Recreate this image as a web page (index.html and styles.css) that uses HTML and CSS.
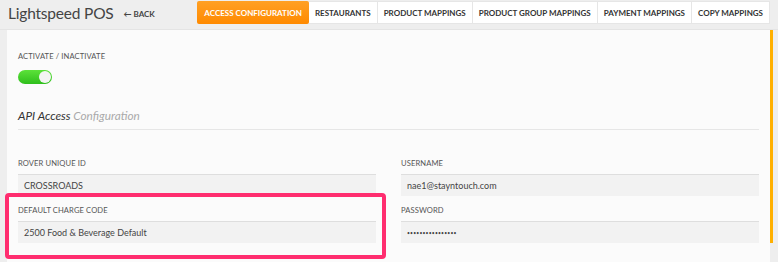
FILE: index.html
```html
<!DOCTYPE html>
<html lang="en">
<head>
<meta charset="utf-8"/>
<title>Lightspeed POS</title>
<link rel="stylesheet" href="styles.css">
</head>
<body>
<header class="topbar">
  <h1>Lightspeed POS</h1>
  <a class="back" href="#">&larr; Back</a>
  <nav class="tabs">
    <button class="tab active">Access Configuration</button>
    <button class="tab">Restaurants</button>
    <button class="tab">Product Mappings</button>
    <button class="tab">Product Group Mappings</button>
    <button class="tab">Payment Mappings</button>
    <button class="tab">Copy Mappings</button>
  </nav>
</header>
<div class="content">
  <section class="panel">
    <div class="label">Activate / Inactivate</div>
    <div class="toggle"><span class="knob"></span></div>
    <h2 class="heading">API Access <span>Configuration</span></h2>
    <div class="grid">
      <div class="field">
        <div class="label">Rover Unique ID</div>
        <div class="input">CROSSROADS</div>
      </div>
      <div class="field">
        <div class="label">Username</div>
        <div class="input">nae1@stayntouch.com</div>
      </div>
      <div class="field highlight">
        <div class="label">Default Charge Code</div>
        <div class="input">2500 Food &amp; Beverage Default</div>
      </div>
      <div class="field">
        <div class="label">Password</div>
        <div class="input dots">&bull;&bull;&bull;&bull;&bull;&bull;&bull;&bull;&bull;&bull;&bull;&bull;&bull;&bull;&bull;&bull;</div>
      </div>
    </div>
  </section>
  <div class="scroll"><div class="thumb"></div></div>
</div>
</body>
</html>
```
FILE: styles.css
```css
body { margin: 0; background: #eeeeee; font-family: "Source Sans Pro", Lato, "Open Sans", sans-serif; color: #444; overflow: hidden; height: 262px; }
.topbar { display: flex; align-items: flex-start; height: 29px; padding: 0 8px; border-bottom: 1px solid #e4e4e4; white-space: nowrap; }
.topbar h1 { margin: 4px 0 0; font-size: 15.5px; font-weight: 400; color: #444; letter-spacing: -0.2px; }
.back { margin: 9px 0 0 10px; font-size: 8px; font-weight: 700; color: #444; text-decoration: none; text-transform: uppercase; }
.tabs { display: flex; margin: 1px 0 0 auto; }
.tab {
  flex-shrink: 0;
  height: 23px;
  padding: 0 6px;
  background: #fff;
  border: 1px solid #e6e6e6;
  border-left: none;
  font-family: inherit;
  font-size: 8px;
  font-weight: 700;
  color: #333;
  text-transform: uppercase;
  white-space: nowrap;
}
.tab.active { background: linear-gradient(#ffa024, #ff8a00); color: #fff; border: none; border-radius: 2px; padding: 0 7px; }
.content { display: flex; padding-left: 7px; }
.panel { position: relative; flex: 1; background: #fbfbfb; padding: 21px 11px 0 11px; height: 232px; box-sizing: border-box; }
.scroll { width: 8px; }
.thumb { width: 3px; height: 213px; background: #ffb000; }
.label { font-size: 7.6px; color: #555; text-transform: uppercase; letter-spacing: 0.1px; }
.toggle { position: relative; width: 34px; height: 14px; margin-top: 9px; border-radius: 8px; background: linear-gradient(#5ce23a, #2fbf1c); }
.knob { position: absolute; right: 1px; top: 1px; width: 12px; height: 12px; border-radius: 50%; background: #f4f4f4; }
.heading { margin: 24px 0 0; padding-bottom: 6px; border-bottom: 1px solid #e6e6e6; font-size: 11.8px; font-weight: 400; font-style: italic; color: #333; }
.heading span { color: #aaa; }
.grid { display: grid; grid-template-columns: 1fr 1fr; column-gap: 25px; row-gap: 9px; margin-top: 28px; }
.field .label { margin-bottom: 6px; }
.input { height: 22px; line-height: 22px; padding: 0 6px; background: #f2f2f2; border-top: 1px solid #dedede; font-size: 9px; color: #444; box-sizing: border-box; }
.input.dots { font-size: 5px; letter-spacing: 0.2px; }
.highlight { position: relative; }
.highlight::after { content: ""; position: absolute; left: -13px; right: -10px; top: -12px; bottom: -16px; border: 4px solid #ff2d6f; border-radius: 4px; }
```
